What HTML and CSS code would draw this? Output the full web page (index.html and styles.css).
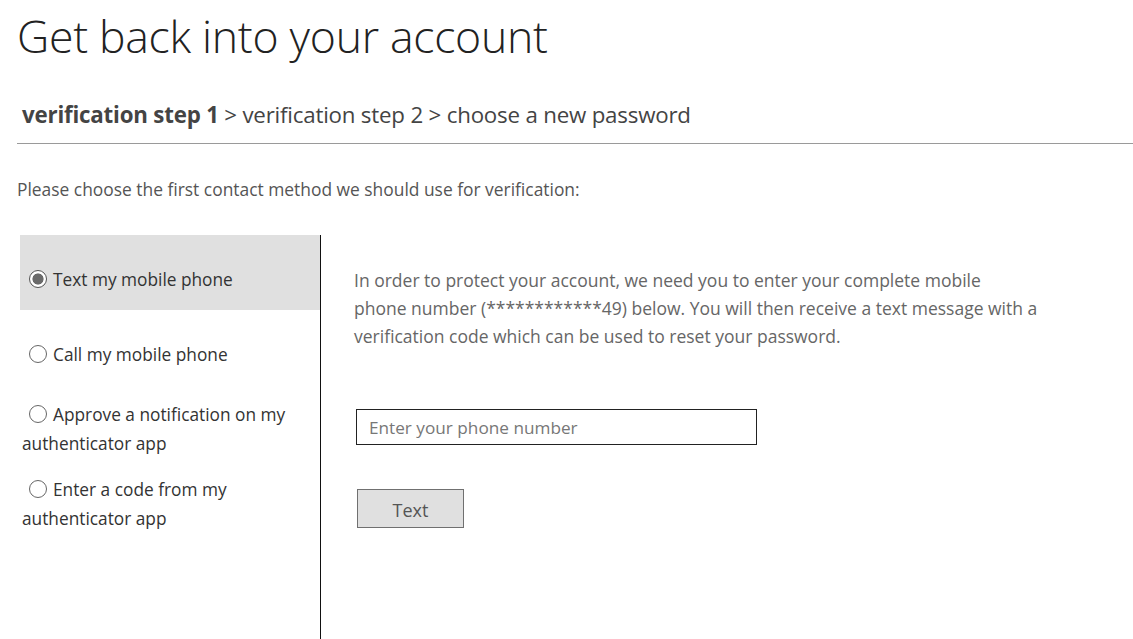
FILE: index.html
```html
<!DOCTYPE html>
<html lang="en">
<head>
<meta charset="utf-8">
<title>Get back into your account</title>
<link rel="stylesheet" href="styles.css">
</head>
<body>
<div class="page">
  <h1 class="title">Get back into your account</h1>
  <div class="steps"><span class="step-current">verification step 1</span> &gt; verification step 2 &gt; choose a new password</div>
  <hr class="rule">
  <p class="intro">Please choose the first contact method we should use for verification:</p>
  <div class="methods">
    <div class="options">
      <div class="option option-selected"><span class="radio radio-checked"></span>Text my mobile phone</div>
      <div class="option"><span class="radio"></span>Call my mobile phone</div>
      <div class="option option-tight"><span class="radio"></span>Approve a notification on my authenticator app</div>
      <div class="option option-tight"><span class="radio"></span>Enter a code from my authenticator app</div>
    </div>
    <div class="detail">
      <p class="detail-text">In order to protect your account, we need you to enter your complete mobile<br>phone number (************49) below. You will then receive a text message with a<br>verification code which can be used to reset your password.</p>
      <input class="phone" type="text" placeholder="Enter your phone number">
      <button class="btn" type="button">Text</button>
    </div>
  </div>
</div>
</body>
</html>
```
FILE: styles.css
```css
html, body {
  margin: 0;
  padding: 0;
  background: #fff;
}
body {
  font-family: "Open Sans", "Noto Sans", sans-serif;
  color: #333;
}
.page {
  padding-left: 17px;
  height: 639px;
  display: flex;
  flex-direction: column;
  overflow: hidden;
}
.title {
  margin: 8px 0 0 0;
  font-weight: 300;
  font-size: 44.6px;
  line-height: 56px;
  color: #222;
  letter-spacing: -0.3px;
}
.steps {
  margin: 36px 0 0 5px;
  font-size: 22.3px;
  line-height: 30px;
  color: #444;
  letter-spacing: -0.2px;
}
.step-current {
  font-weight: 700;
  color: #444;
}
.rule {
  margin: 13px 0 0 0;
  border: 0;
  border-top: 1.5px solid #9a9a9a;
  height: 0;
}
.intro {
  margin: 34px 0 0 0;
  font-size: 17.4px;
  line-height: 22px;
  color: #555;
  letter-spacing: 0;
}
.methods {
  margin: 35px 0 0 3px;
  display: flex;
  flex: 1;
}
.options {
  width: 300px;
  border-right: 1.5px solid #111;
  font-size: 17.3px;
  line-height: 29px;
  color: #333;
}
.option {
  padding: 30px 20px 16px 2px;
}
.option-tight {
  padding: 15px 20px 2px 2px;
}
.option-selected {
  background: #e0e0e0;
}
.radio {
  display: inline-block;
  box-sizing: border-box;
  width: 18px;
  height: 18px;
  border: 1.3px solid #666;
  border-radius: 50%;
  margin: 0 6px 0 7px;
  vertical-align: -2px;
  background: #fff;
}
.radio-checked {
  border: 1.6px solid #555;
  background: radial-gradient(circle, #6a6a6a 0 5.2px, #fff 5.9px);
}
.detail {
  padding: 31px 0 0 33px;
  display: flex;
  flex-direction: column;
  align-items: flex-start;
}
.detail-text {
  margin: 0;
  width: 720px;
  font-size: 17.5px;
  line-height: 28px;
  color: #666;
  letter-spacing: 0;
}
.phone {
  margin: 59px 0 0 2px;
  box-sizing: border-box;
  width: 401px;
  height: 36px;
  border: 1.3px solid #222;
  padding: 0 12px;
  font-family: "Open Sans", "Noto Sans", sans-serif;
  font-size: 17.2px;
  color: #333;
  outline: none;
}
.phone::placeholder {
  color: #777;
}
.btn {
  margin: 44px 0 0 3px;
  box-sizing: border-box;
  width: 107px;
  height: 39px;
  background: #e0e0e0;
  border: 1.3px solid #707070;
  font-family: "Open Sans", "Noto Sans", sans-serif;
  font-size: 18px;
  color: #555;
  padding: 3px 0 0 0;
}
```
